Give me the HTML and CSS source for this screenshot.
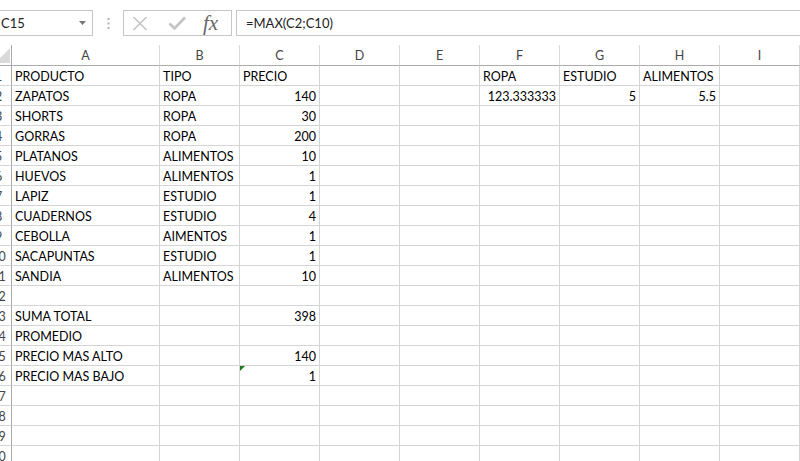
FILE: index.html
```html
<!DOCTYPE html>
<html lang="es">
<head>
  <meta charset="UTF-8">
  <meta name="viewport" content="width=device-width, initial-scale=1.0">
  <title>Libro1 - Excel</title>
  <link rel="stylesheet" href="styles.css">
</head>
<body>
  <div class="formula-bar">
    <div class="name-box">
      <span>C15</span>
      <svg class="caret" width="7" height="4" viewBox="0 0 7 4"><path d="M0 0h7L3.5 4z"/></svg>
    </div>
    <svg class="grip" width="3" height="11" viewBox="0 0 3 11">
      <rect x="0.5" y="0" width="2" height="2"/>
      <rect x="0.5" y="4.5" width="2" height="2"/>
      <rect x="0.5" y="9" width="2" height="2"/>
    </svg>
    <div class="fx-box">
      <svg class="icon-cancel" width="16" height="15" viewBox="0 0 16 15"><path d="M1.5 1l13 13M14.5 1l-13 13"/></svg>
      <svg class="icon-enter" width="18" height="14" viewBox="0 0 18 14"><path d="M1.5 7.5l5 5L17 1.5"/></svg>
      <span class="fx">fx</span>
    </div>
    <div class="formula">=MAX(C2;C10)</div>
  </div>

  <div class="sheet">
    <div class="row head">
      <div class="corner"><span class="select-all"></span></div>
      <div class="ch">A</div><div class="ch">B</div><div class="ch">C</div><div class="ch">D</div><div class="ch">E</div>
      <div class="ch">F</div><div class="ch">G</div><div class="ch">H</div><div class="ch">I</div>
    </div>
    <div class="row">
      <div class="rh">1</div>
      <div class="c">PRODUCTO</div><div class="c">TIPO</div><div class="c">PRECIO</div><div class="c"></div><div class="c"></div>
      <div class="c">ROPA</div><div class="c">ESTUDIO</div><div class="c">ALIMENTOS</div><div class="c"></div>
    </div>
    <div class="row">
      <div class="rh">2</div>
      <div class="c">ZAPATOS</div><div class="c">ROPA</div><div class="c num">140</div><div class="c"></div><div class="c"></div>
      <div class="c num">123.333333</div><div class="c num">5</div><div class="c num">5.5</div><div class="c"></div>
    </div>
    <div class="row">
      <div class="rh">3</div>
      <div class="c">SHORTS</div><div class="c">ROPA</div><div class="c num">30</div><div class="c"></div><div class="c"></div>
      <div class="c"></div><div class="c"></div><div class="c"></div><div class="c"></div>
    </div>
    <div class="row">
      <div class="rh">4</div>
      <div class="c">GORRAS</div><div class="c">ROPA</div><div class="c num">200</div><div class="c"></div><div class="c"></div>
      <div class="c"></div><div class="c"></div><div class="c"></div><div class="c"></div>
    </div>
    <div class="row">
      <div class="rh">5</div>
      <div class="c">PLATANOS</div><div class="c">ALIMENTOS</div><div class="c num">10</div><div class="c"></div><div class="c"></div>
      <div class="c"></div><div class="c"></div><div class="c"></div><div class="c"></div>
    </div>
    <div class="row">
      <div class="rh">6</div>
      <div class="c">HUEVOS</div><div class="c">ALIMENTOS</div><div class="c num">1</div><div class="c"></div><div class="c"></div>
      <div class="c"></div><div class="c"></div><div class="c"></div><div class="c"></div>
    </div>
    <div class="row">
      <div class="rh">7</div>
      <div class="c">LAPIZ</div><div class="c">ESTUDIO</div><div class="c num">1</div><div class="c"></div><div class="c"></div>
      <div class="c"></div><div class="c"></div><div class="c"></div><div class="c"></div>
    </div>
    <div class="row">
      <div class="rh">8</div>
      <div class="c">CUADERNOS</div><div class="c">ESTUDIO</div><div class="c num">4</div><div class="c"></div><div class="c"></div>
      <div class="c"></div><div class="c"></div><div class="c"></div><div class="c"></div>
    </div>
    <div class="row">
      <div class="rh">9</div>
      <div class="c">CEBOLLA</div><div class="c">AIMENTOS</div><div class="c num">1</div><div class="c"></div><div class="c"></div>
      <div class="c"></div><div class="c"></div><div class="c"></div><div class="c"></div>
    </div>
    <div class="row">
      <div class="rh">10</div>
      <div class="c">SACAPUNTAS</div><div class="c">ESTUDIO</div><div class="c num">1</div><div class="c"></div><div class="c"></div>
      <div class="c"></div><div class="c"></div><div class="c"></div><div class="c"></div>
    </div>
    <div class="row">
      <div class="rh">11</div>
      <div class="c">SANDIA</div><div class="c">ALIMENTOS</div><div class="c num">10</div><div class="c"></div><div class="c"></div>
      <div class="c"></div><div class="c"></div><div class="c"></div><div class="c"></div>
    </div>
    <div class="row">
      <div class="rh">12</div>
      <div class="c"></div><div class="c"></div><div class="c"></div><div class="c"></div><div class="c"></div>
      <div class="c"></div><div class="c"></div><div class="c"></div><div class="c"></div>
    </div>
    <div class="row">
      <div class="rh">13</div>
      <div class="c">SUMA TOTAL</div><div class="c"></div><div class="c num">398</div><div class="c"></div><div class="c"></div>
      <div class="c"></div><div class="c"></div><div class="c"></div><div class="c"></div>
    </div>
    <div class="row">
      <div class="rh">14</div>
      <div class="c">PROMEDIO</div><div class="c"></div><div class="c"></div><div class="c"></div><div class="c"></div>
      <div class="c"></div><div class="c"></div><div class="c"></div><div class="c"></div>
    </div>
    <div class="row">
      <div class="rh">15</div>
      <div class="c">PRECIO MAS ALTO</div><div class="c"></div><div class="c num">140</div><div class="c"></div><div class="c"></div>
      <div class="c"></div><div class="c"></div><div class="c"></div><div class="c"></div>
    </div>
    <div class="row">
      <div class="rh">16</div>
      <div class="c">PRECIO MAS BAJO</div><div class="c"></div><div class="c num flagged">1</div><div class="c"></div><div class="c"></div>
      <div class="c"></div><div class="c"></div><div class="c"></div><div class="c"></div>
    </div>
    <div class="row">
      <div class="rh">17</div>
      <div class="c"></div><div class="c"></div><div class="c"></div><div class="c"></div><div class="c"></div>
      <div class="c"></div><div class="c"></div><div class="c"></div><div class="c"></div>
    </div>
    <div class="row">
      <div class="rh">18</div>
      <div class="c"></div><div class="c"></div><div class="c"></div><div class="c"></div><div class="c"></div>
      <div class="c"></div><div class="c"></div><div class="c"></div><div class="c"></div>
    </div>
    <div class="row">
      <div class="rh">19</div>
      <div class="c"></div><div class="c"></div><div class="c"></div><div class="c"></div><div class="c"></div>
      <div class="c"></div><div class="c"></div><div class="c"></div><div class="c"></div>
    </div>
    <div class="row">
      <div class="rh">20</div>
      <div class="c"></div><div class="c"></div><div class="c"></div><div class="c"></div><div class="c"></div>
      <div class="c"></div><div class="c"></div><div class="c"></div><div class="c"></div>
    </div>
  </div>
</body>
</html>
```

FILE: styles.css
```css
html, body {
  margin: 0;
  height: 100%;
  overflow: hidden;
  background: #fff;
}
body {
  font-family: Lato, "Liberation Sans", sans-serif;
  font-size: 12.5px;
  color: #000;
}

/* formula bar */
.formula-bar {
  display: flex;
  align-items: center;
  height: 26px;
  margin: 10px 0 0 -5px;
  font-size: 13px;
}
.name-box {
  display: flex;
  align-items: center;
  justify-content: space-between;
  box-sizing: border-box;
  width: 98px;
  height: 26px;
  padding: 0 6px 0 5px;
  border: 1px solid #c6c6c6;
  color: #222;
}
.caret {
  fill: #777;
}
.grip {
  margin-left: 14px;
  fill: #b0b0b0;
}
.fx-box {
  display: flex;
  align-items: center;
  box-sizing: border-box;
  width: 109px;
  height: 26px;
  margin-left: 13px;
  padding-left: 8px;
  border: 1px solid #c6c6c6;
}
.icon-cancel path,
.icon-enter path {
  fill: none;
  stroke: #c4c4c4;
}
.icon-cancel path {
  stroke-width: 1.6;
}
.icon-enter {
  margin-left: 20px;
}
.icon-enter path {
  stroke-width: 2.6;
}
.fx {
  margin-left: 17px;
  font-family: "Liberation Serif", serif;
  font-style: italic;
  font-size: 21px;
  color: #666;
  line-height: 1;
}
.formula {
  flex: 1;
  box-sizing: border-box;
  height: 26px;
  margin: 0 -10px 0 4px;
  padding-left: 9px;
  border: 1px solid #c6c6c6;
  line-height: 24px;
  color: #222;
}

/* grid */
.sheet {
  margin: 9px 0 0 -14px;
}
.row {
  display: grid;
  grid-template-columns: 26px 148px repeat(8, 80px);
  height: 20px;
}
.row.head {
  height: 21px;
}
.corner,
.rh,
.ch,
.c {
  box-sizing: border-box;
  overflow: hidden;
  white-space: nowrap;
}
.corner {
  position: relative;
  border-right: 1px solid #ababab;
  border-bottom: 1px solid #ababab;
}
.select-all {
  position: absolute;
  right: 1px;
  bottom: 2px;
  width: 15px;
  height: 15px;
  background: #dadada;
  clip-path: polygon(100% 0, 100% 100%, 0 100%);
}
.ch {
  border-right: 1px solid #dadada;
  border-bottom: 1px solid #ababab;
  text-align: center;
  line-height: 21px;
  color: #444;
}
.rh {
  padding-top: 1px;
  border-right: 1px solid #ababab;
  border-bottom: 1px solid #d4d4d4;
  text-align: center;
  line-height: 19px;
  color: #444;
}
.c {
  position: relative;
  padding: 1px 3px 0;
  border-right: 1px solid #d4d4d4;
  border-bottom: 1px solid #d4d4d4;
  line-height: 19px;
}
.c.num {
  text-align: right;
}
.c.flagged::before {
  content: "";
  position: absolute;
  top: 0;
  left: 0;
  width: 5px;
  height: 5px;
  background: #1b7a1b;
  clip-path: polygon(0 0, 100% 0, 0 100%);
}
```
